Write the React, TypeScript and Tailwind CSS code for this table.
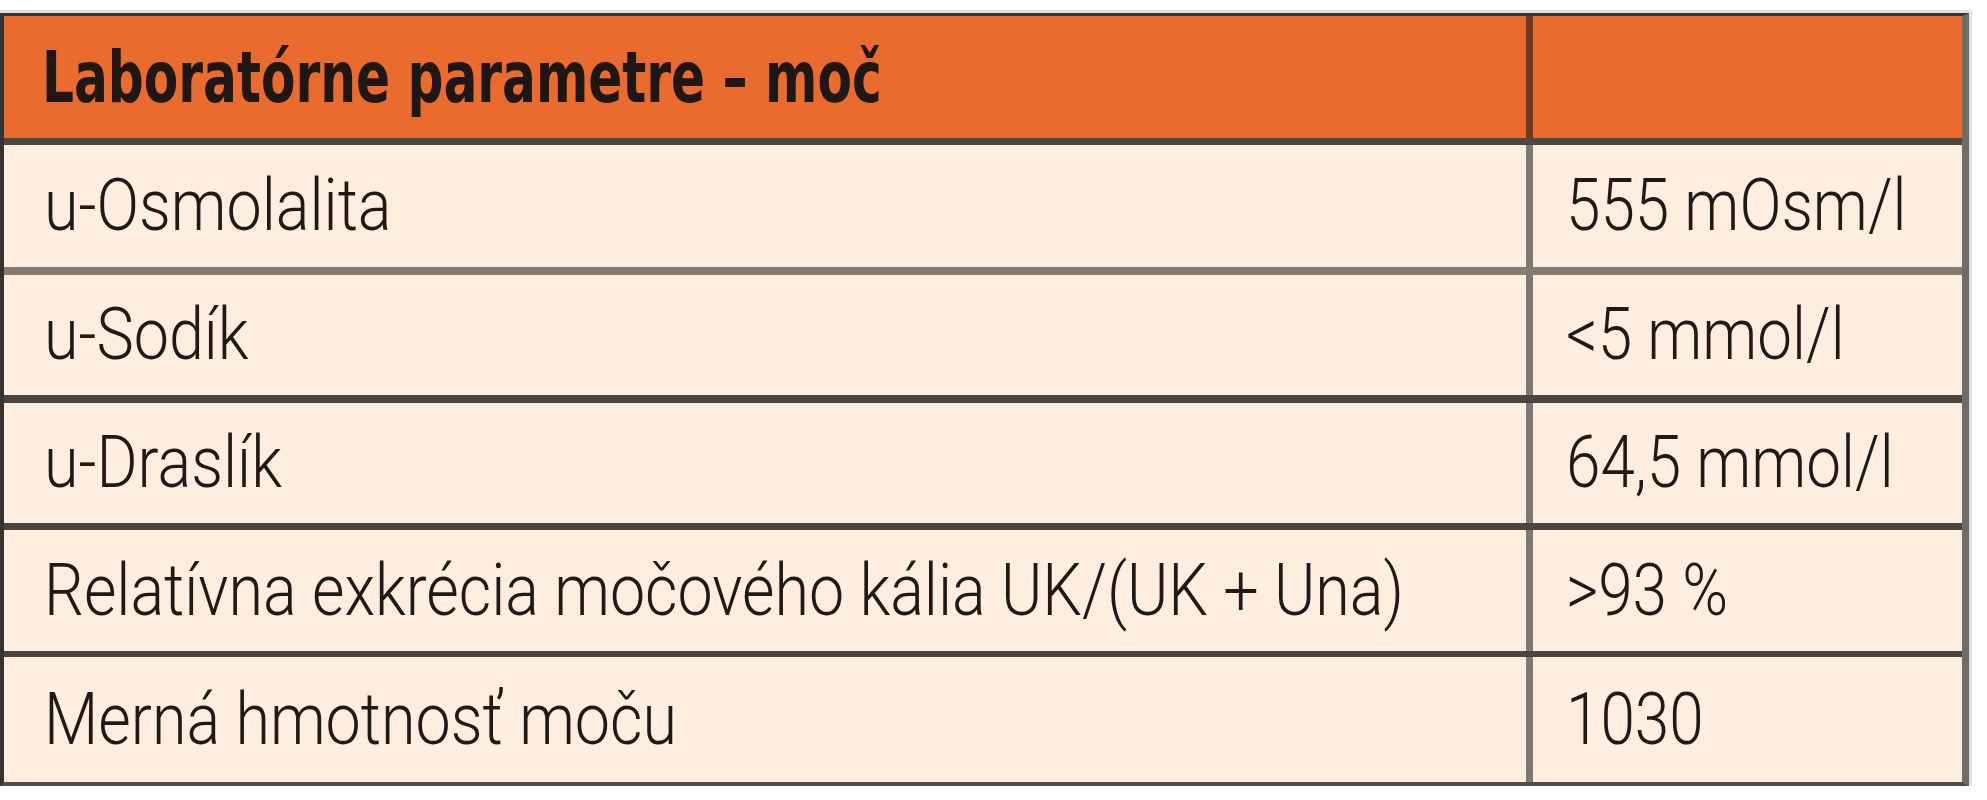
import React from "react";

const rows: [string, string][] = [
  ["u-Osmolalita", "555 mOsm/l"],
  ["u-Sodík", "<5 mmol/l"],
  ["u-Draslík", "64,5 mmol/l"],
  ["Relatívna exkrécia močového kália UK/(UK + Una)", ">93 %"],
  ["Merná hmotnosť moču", "1030"],
];

const rowCls = [
  "h-[130px] border-b-[8px] border-[#857d75]",
  "h-[128px] border-b-[8px] border-[#4a4542]",
  "h-[127px] border-b-[7px] border-[#4a4542]",
  "h-[127px] border-b-[6px] border-[#4a4542]",
  "h-[125px]",
];

const headFont = {
  fontFamily: '"DejaVu Sans Condensed", "DejaVu Sans", sans-serif',
};
const bodyFont = {
  fontFamily: 'Roboto, "Liberation Sans", sans-serif',
};

export default function App() {
  return (
    <div className="w-[1987px] h-[800px] bg-white pt-[10px]">
      <div className="w-[1972px] border-t-[3px] border-r-[3px] border-[#e3e3e3]">
        <div className="w-[1969px] border-t-[3px] border-l-[4px] border-r-[7px] border-b-[4px] border-t-[#3a3532] border-l-[#37322f] border-r-[#6f6b69] border-b-[#524d4a]">
          <div className="flex h-[129px] bg-[#e96b2d] border-b-[7px] border-[#4b4744]">
            <div
              className="flex-1 flex items-center pl-[38px] text-[72px] font-bold text-[#1e1714] whitespace-nowrap overflow-hidden"
              style={headFont}
            >
              <span className="inline-block origin-left scale-x-[0.775]">Laboratórne parametre – moč</span>
            </div>
            <div className="w-[436px] border-l-[7px] border-[#6a3b22]" />
          </div>
          {rows.map(([a, b], i) => (
            <div key={i} className={"flex bg-[#fdeee0] " + rowCls[i]} style={bodyFont}>
              <div className="flex-1 flex items-center pl-[40px] text-[73px] font-light text-[#1f1a17] whitespace-nowrap overflow-hidden">
                <span className="inline-block origin-left scale-x-[0.86]">{a}</span>
              </div>
              <div className="w-[436px] border-l-[7px] border-[#7d7873] flex items-center pl-[33px] text-[73px] font-light text-[#1f1a17] whitespace-nowrap overflow-hidden">
                <span className="inline-block origin-left scale-x-[0.85]">{b}</span>
              </div>
            </div>
          ))}
        </div>
      </div>
    </div>
  );
}
